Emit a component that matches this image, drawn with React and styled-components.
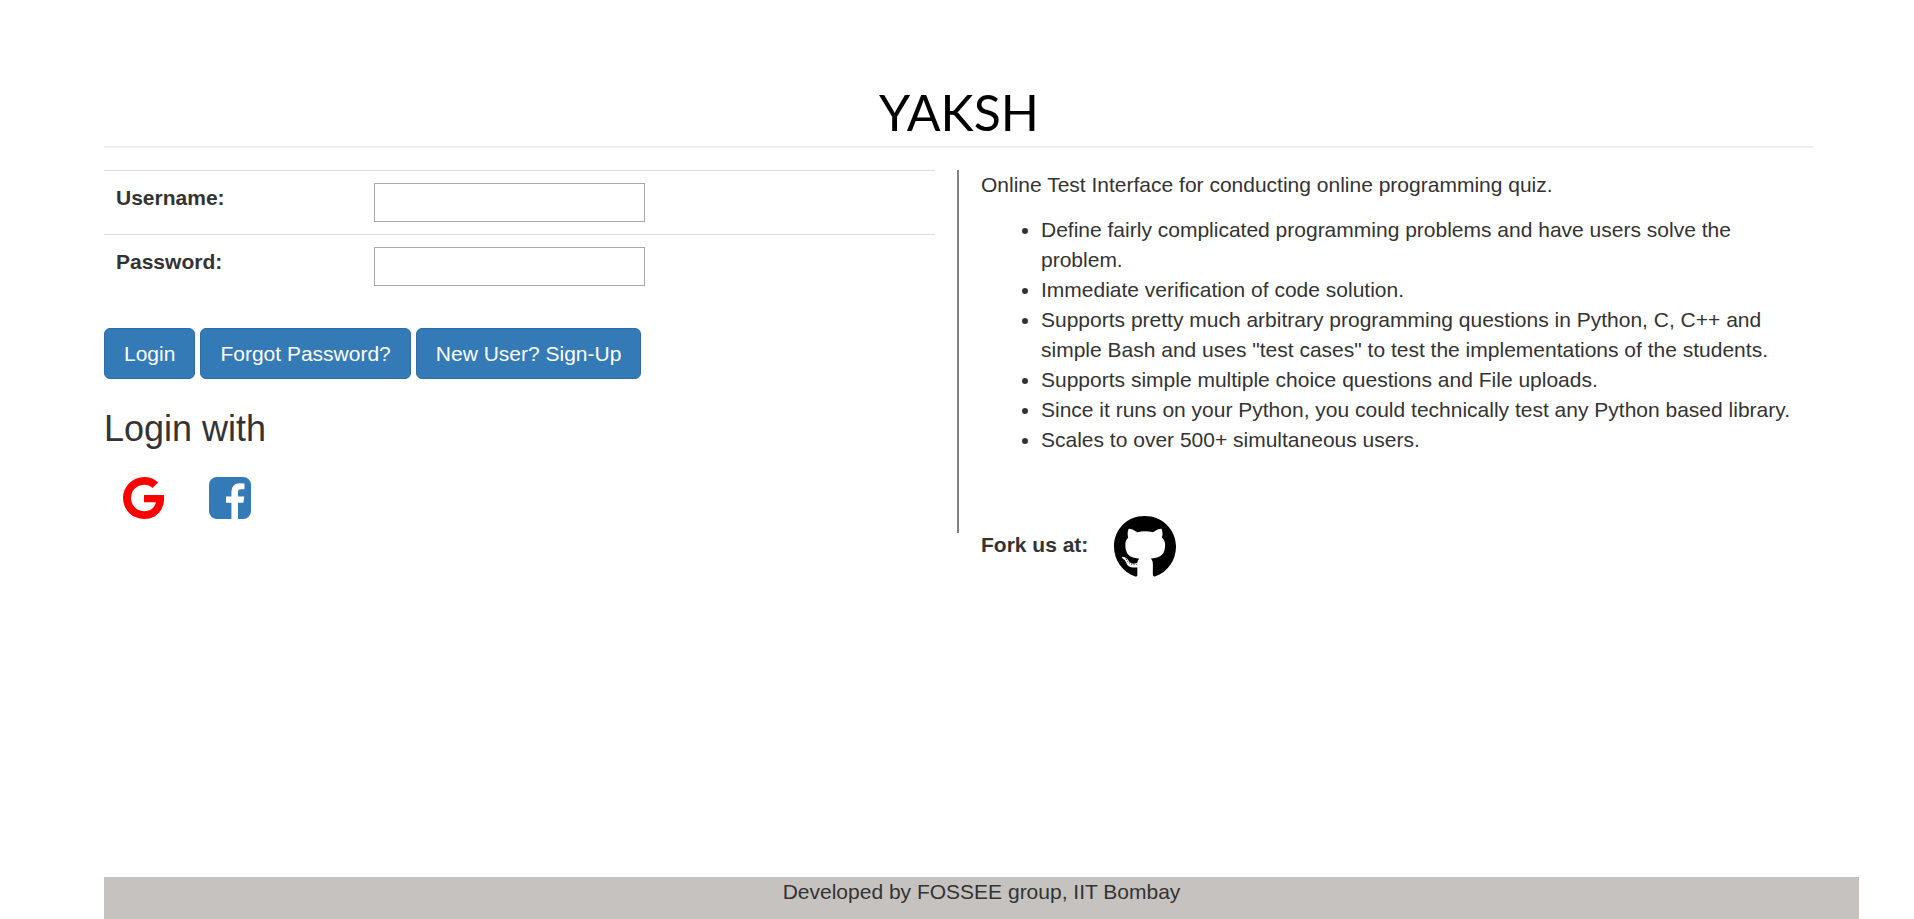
import React from "react";
import styled, { createGlobalStyle } from "styled-components";
import { FaGithub } from "react-icons/fa";

const GlobalStyle = createGlobalStyle`
  *, *::before, *::after { box-sizing: border-box; }
  body {
    margin: 0;
    background: #fff;
    color: #333;
    font-family: "Liberation Sans", Arial, Helvetica, sans-serif;
    font-size: 21px;
    line-height: 30px;
  }
`;

const Page = styled.div`
  display: flex;
  flex-direction: column;
  min-height: 100vh;
  padding: 82px 100px 0 104px;
`;

const Header = styled.header`
  padding-bottom: 4px;
  border-bottom: 2px solid #eee;
  text-align: center;
`;

const Brand = styled.h1`
  margin: 0;
  color: #000;
  font-family: Lato, sans-serif;
  font-size: 50px;
  font-weight: 400;
  line-height: 60px;
`;

const Columns = styled.main`
  display: grid;
  grid-template-columns: 1fr 1fr;
  align-items: start;
  margin-top: 22px;
`;

const LoginPanel = styled.section`
  padding: 0 22px 14px 0;
  border-right: 2px solid #808080;
`;

const InfoPanel = styled.section`
  padding: 0 22px;
`;

const FieldTable = styled.table`
  width: 100%;
  margin-bottom: 30px;
  border-collapse: separate;
  border-spacing: 0;
  table-layout: fixed;
`;

const LabelCell = styled.th`
  width: 258px;
  padding: 12px;
  border-top: 1px solid #ddd;
  text-align: left;
  vertical-align: top;
`;

const InputCell = styled.td`
  padding: 12px;
  border-top: 1px solid #ddd;
`;

const TextInput = styled.input`
  display: block;
  width: 271px;
  max-width: 100%;
  height: 39px;
  padding: 2px 3px;
  border: 1px solid #a9a9a9;
  background: #fff;
  color: inherit;
  font: inherit;
`;

const Actions = styled.div`
  display: flex;
  flex-wrap: wrap;
  gap: 5px;
`;

const Button = styled.button`
  padding: 10px 19px 9px;
  border: 1px solid #2e6da4;
  border-radius: 6px;
  background: #337ab7;
  color: #fff;
  font: inherit;
  text-decoration: none;
  cursor: pointer;
`;

const SectionTitle = styled.h3`
  margin: 30px 0 28px;
  font-size: 36px;
  font-weight: 400;
  line-height: 40px;
`;

const SocialLinks = styled.nav`
  display: flex;
  gap: 44px;
  padding-left: 19px;
`;

const SocialLink = styled.a`
  display: block;
  height: 42px;
  color: ${(p) => p.$color};
`;

const Intro = styled.p`
  margin: 0 0 15px;
`;

const FeatureList = styled.ul`
  margin: 0 0 60px;
  padding-left: 60px;
`;

const ForkRow = styled.div`
  display: flex;
  align-items: center;
  gap: 25px;
  font-weight: 700;
`;

const ForkLabel = styled.span`
  padding-bottom: 4px;
`;

const ForkLink = styled.a`
  display: block;
  height: 64px;
  color: #000;
`;

const Footer = styled.footer`
  height: 42px;
  margin: auto -45px 0 0;
  background: #c6c2c0;
  text-align: center;
`;

const GoogleIcon = () => (
  <svg width="42" height="42" viewBox="0 88 1536 1536" fill="currentColor" aria-hidden="true">
    <path d="M768 750h725q12 67 12 124 0 217-91 387.5t-259.5 266.5-386.5 96q-157 0-299-60.5t-245-163.5-163.5-245-60.5-299 60.5-299 163.5-245 245-163.5 299-60.5q300 0 515 201l-209 201q-123-119-306-119-129 0-238.5 65t-173.5 176.5-64 243.5 64 243.5 173.5 176.5 238.5 65q87 0 160-24t120-60 82-82 51.5-87 22.5-78h-436v-264z" />
  </svg>
);

const FacebookIcon = () => (
  <svg width="42" height="42" viewBox="128 128 1536 1536" fill="currentColor" aria-hidden="true">
    <path d="M1376 128q119 0 203.5 84.5t84.5 203.5v960q0 119-84.5 203.5t-203.5 84.5h-188v-595h199l30-232h-229v-148q0-56 23.5-84t91.5-28l122-1v-207q-63-9-178-9-136 0-217.5 80t-81.5 226v171h-200v232h200v595h-532q-119 0-203.5-84.5t-84.5-203.5v-960q0-119 84.5-203.5t203.5-84.5h960z" />
  </svg>
);

const FEATURES = [
  "Define fairly complicated programming problems and have users solve the problem.",
  "Immediate verification of code solution.",
  'Supports pretty much arbitrary programming questions in Python, C, C++ and simple Bash and uses "test cases" to test the implementations of the students.',
  "Supports simple multiple choice questions and File uploads.",
  "Since it runs on your Python, you could technically test any Python based library.",
  "Scales to over 500+ simultaneous users.",
];

const Field = ({ id, label, type }) => (
  <tr>
    <LabelCell scope="row">
      <label htmlFor={id}>{label}</label>
    </LabelCell>
    <InputCell>
      <TextInput id={id} name={id} type={type} />
    </InputCell>
  </tr>
);

export default function App() {
  return (
    <>
      <GlobalStyle />
      <Page>
        <Header>
          <Brand>YAKSH</Brand>
        </Header>
        <Columns>
          <LoginPanel>
            <form onSubmit={(e) => e.preventDefault()}>
              <FieldTable>
                <tbody>
                  <Field id="username" label="Username:" type="text" />
                  <Field id="password" label="Password:" type="password" />
                </tbody>
              </FieldTable>
              <Actions>
                <Button type="submit">Login</Button>
                <Button as="a" href="#forgot">Forgot Password?</Button>
                <Button as="a" href="#register">New User? Sign-Up</Button>
              </Actions>
            </form>
            <SectionTitle>Login with</SectionTitle>
            <SocialLinks aria-label="Login with">
              <SocialLink href="#google" $color="#f00" aria-label="Google">
                <GoogleIcon />
              </SocialLink>
              <SocialLink href="#facebook" $color="#337ab7" aria-label="Facebook">
                <FacebookIcon />
              </SocialLink>
            </SocialLinks>
          </LoginPanel>
          <InfoPanel>
            <Intro>Online Test Interface for conducting online programming quiz.</Intro>
            <FeatureList>
              {FEATURES.map((text) => (
                <li key={text}>{text}</li>
              ))}
            </FeatureList>
            <ForkRow>
              <ForkLabel>Fork us at:</ForkLabel>
              <ForkLink href="#github" aria-label="GitHub">
                <FaGithub size={64} />
              </ForkLink>
            </ForkRow>
          </InfoPanel>
        </Columns>
        <Footer>Developed by FOSSEE group, IIT Bombay</Footer>
      </Page>
    </>
  );
}
